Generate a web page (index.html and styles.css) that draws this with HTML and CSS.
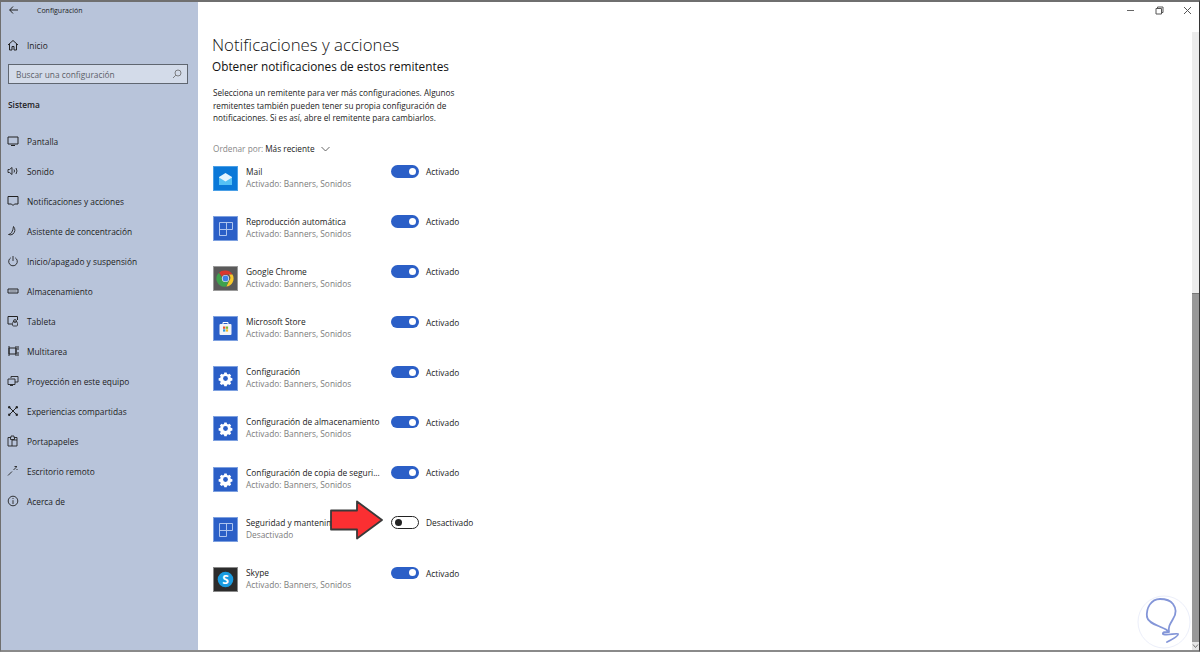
FILE: index.html
```html
<!DOCTYPE html>
<html lang="en">
<head>
  <meta charset="UTF-8">
  <meta name="viewport" content="width=device-width, initial-scale=1.0">
  <title>Configuración</title>
  <link rel="stylesheet" href="styles.css">
</head>
<body>
  <svg class="defs" width="0" height="0">
    <symbol id="tile-grid" viewBox="0 0 25 25">
      <path d="M6.500 6.500h13v7h-6v6h-7zM6.500 13.500h7M13.500 6.500v7" fill="none" stroke="#bccff3" stroke-width=".9"/>
    </symbol>
    <symbol id="tile-gear" viewBox="0 0 25 25">
      <g transform="translate(2.500 2.500) scale(.8)">
        <path d="M11 5h3l.4 2 1.400.6 1.700-1.100 2.100 2.100-1.100 1.700.6 1.400 2 .4v3l-2 .4-.6 1.400 1.100 1.700-2.100 2.100-1.700-1.100-1.400.6-.4 2h-3l-.4-2-1.400-.6-1.700 1.100-2.100-2.100 1.100-1.700-.6-1.400-2-.4v-3l2-.4.6-1.400-1.100-1.700 2.100-2.100 1.700 1.100 1.400-.6z" fill="#fff"/>
        <circle cx="12.500" cy="12.500" r="3" fill="#2b5fc7"/>
      </g>
    </symbol>
  </svg>

  <aside class="sidebar">
    <div class="titlebar">
      <svg class="back" width="9" height="8" viewBox="0 0 9 8"><path d="M4 .5L.7 4 4 7.500M.7 4H9" fill="none" stroke="#222" stroke-width="1"/></svg>
      <span class="apptitle">Configuración</span>
    </div>
    <div class="nav-item home">
      <svg class="nav-icon" viewBox="0 0 12 12"><path d="M1 6l5-4.500L11 6M2.500 5v6H5V7.500h2V11h2.500V5" fill="none" stroke="#222" stroke-width="1"/></svg>
      <span>Inicio</span>
    </div>
    <div class="search">
      <span>Buscar una configuración</span>
      <svg width="10" height="10" viewBox="0 0 10 10"><circle cx="6" cy="4" r="3" fill="none" stroke="#666" stroke-width=".8"/><path d="M3.800 6.200L1 9" stroke="#666" stroke-width=".8"/></svg>
    </div>
    <div class="section-title">Sistema</div>
    <nav class="nav">
      <div class="nav-item">
        <svg class="nav-icon" viewBox="0 0 12 12"><path d="M1 2h10v7H1zM4 10.500h4" fill="none" stroke="#222" stroke-width="1"/></svg>
        <span>Pantalla</span>
      </div>
      <div class="nav-item">
        <svg class="nav-icon" viewBox="0 0 12 12"><path d="M1 4.500h1.500L5 2.500v7L2.500 7.500H1zM7 4.500q1 1.500 0 3M9 3q2 3 0 6" fill="none" stroke="#222" stroke-width=".9"/></svg>
        <span>Sonido</span>
      </div>
      <div class="nav-item">
        <svg class="nav-icon" viewBox="0 0 12 12"><path d="M1 1.500h10V9H7.500L6 10.500 4.500 9H1z" fill="none" stroke="#222" stroke-width="1"/></svg>
        <span>Notificaciones y acciones</span>
      </div>
      <div class="nav-item">
        <svg class="nav-icon" viewBox="0 0 12 12"><path d="M6.500 1.500q3 4-.5 7.500-2 1.500-4.500.5 4-.5 5-8z" fill="none" stroke="#222" stroke-width=".9"/></svg>
        <span>Asistente de concentración</span>
      </div>
      <div class="nav-item">
        <svg class="nav-icon" viewBox="0 0 12 12"><path d="M3.800 2.800a4.300 4.300 0 1 0 4.400 0M6 1v5" fill="none" stroke="#222" stroke-width=".9"/></svg>
        <span>Inicio/apagado y suspensión</span>
      </div>
      <div class="nav-item">
        <svg class="nav-icon" viewBox="0 0 12 12"><path d="M1 4h10v4H1z" fill="none" stroke="#222" stroke-width="1"/><path d="M2.500 6h7" stroke="#777" stroke-width="1"/></svg>
        <span>Almacenamiento</span>
      </div>
      <div class="nav-item">
        <svg class="nav-icon" viewBox="0 0 12 12"><path d="M5 9H1V1.500h9.500V5" fill="none" stroke="#222" stroke-width="1"/><circle cx="8" cy="6" r="1.500" fill="none" stroke="#222" stroke-width=".8"/><path d="M5.500 8.500a2.500 2.500 0 0 1 5 0V10a1 1 0 0 1-1 1h-3a1 1 0 0 1-1-1z" fill="none" stroke="#222" stroke-width=".8"/></svg>
        <span>Tableta</span>
      </div>
      <div class="nav-item">
        <svg class="nav-icon" viewBox="0 0 12 12"><path d="M2 1v10M9 1v10M2 3h7v6H2zM11 1v4M11 7v4" fill="none" stroke="#222" stroke-width="1"/></svg>
        <span>Multitarea</span>
      </div>
      <div class="nav-item">
        <svg class="nav-icon" viewBox="0 0 12 12"><path d="M4 3V1.500h7V7H8M1 4h7v5.500H1zM3 10.500h3" fill="none" stroke="#222" stroke-width=".9"/></svg>
        <span>Proyección en este equipo</span>
      </div>
      <div class="nav-item">
        <svg class="nav-icon" viewBox="0 0 12 12"><path d="M2.500 2.500l7 7M9.500 2.500l-7 7" stroke="#222" stroke-width="1"/><circle cx="2.200" cy="2.200" r="1.200" fill="#222"/><circle cx="9.800" cy="2.200" r="1.200" fill="#222"/><circle cx="2.200" cy="9.800" r="1.200" fill="#222"/><circle cx="9.800" cy="9.800" r="1.200" fill="#222"/></svg>
        <span>Experiencias compartidas</span>
      </div>
      <div class="nav-item">
        <svg class="nav-icon" viewBox="0 0 12 12"><path d="M1 2.500h3V1h3v1.500h3V11H1zM5 5h5M5 5v6M3.500 2.500v2h4v-2" fill="none" stroke="#222" stroke-width=".9"/></svg>
        <span>Portapapeles</span>
      </div>
      <div class="nav-item">
        <svg class="nav-icon" viewBox="0 0 12 12"><path d="M1 10.500l4-4M6.500 5l3-3M7.500 1.500H10M10 5V4" fill="none" stroke="#222" stroke-width=".9"/></svg>
        <span>Escritorio remoto</span>
      </div>
      <div class="nav-item">
        <svg class="nav-icon" viewBox="0 0 12 12"><circle cx="6" cy="6" r="4.800" fill="none" stroke="#222" stroke-width=".9"/><path d="M6 5.200V9M6 3v1" stroke="#222" stroke-width=".9"/></svg>
        <span>Acerca de</span>
      </div>
    </nav>
  </aside>

  <main class="content">
    <div class="winbuttons">
      <svg width="9" height="9" viewBox="0 0 9 9"><path d="M0 4.500h7" stroke="#666" stroke-width="1"/></svg>
      <svg width="9" height="9" viewBox="0 0 9 9"><path d="M1 2.500h5.500V8H1zM2.500 2.500V1H8v5.500H6.500" fill="none" stroke="#555" stroke-width="1"/></svg>
      <svg width="9" height="9" viewBox="0 0 9 9"><path d="M1 1l7 7M8 1L1 8" stroke="#555" stroke-width="1"/></svg>
    </div>
    <h1>Notificaciones y acciones</h1>
    <h2>Obtener notificaciones de estos remitentes</h2>
    <p class="intro">Selecciona un remitente para ver más configuraciones. Algunos remitentes también pueden tener su propia configuración de notificaciones. Si es así, abre el remitente para cambiarlos.</p>
    <div class="sort">
      <span class="sort-label">Ordenar por:</span>
      <span class="sort-value">Más reciente</span>
      <svg width="9" height="6" viewBox="0 0 9 6"><path d="M.5 1l4 4 4-4" fill="none" stroke="#555" stroke-width=".9"/></svg>
    </div>

    <div class="senders">
      <div class="sender">
        <div class="tile tile-mail">
          <svg width="25" height="25" viewBox="0 0 25 25">
            <path d="M6 11l6.500-4 6.500 4v7H6z" fill="#e4f4fe"/>
            <path d="M6 11.500l6.500 4 6.500-4V19H6z" fill="#54c0f5"/>
          </svg>
        </div>
        <div class="sender-text"><div class="name">Mail</div><div class="state">Activado: Banners, Sonidos</div></div>
        <div class="toggle on"></div><span class="toggle-label">Activado</span>
      </div>
      <div class="sender">
        <div class="tile"><svg width="25" height="25"><use href="#tile-grid"/></svg></div>
        <div class="sender-text"><div class="name">Reproducción automática</div><div class="state">Activado: Banners, Sonidos</div></div>
        <div class="toggle on"></div><span class="toggle-label">Activado</span>
      </div>
      <div class="sender">
        <div class="tile tile-dark">
          <svg width="25" height="25" viewBox="0 0 25 25">
            <path d="M12.500 4.500a8 8 0 0 1 7 4h-7a4 4 0 0 0-3.600 2.300L6 6.800a8 8 0 0 1 6.500-2.300z" fill="#d9382e"/>
            <path d="M19.500 8.500a8 8 0 0 1-6.200 12l3-6a4 4 0 0 0-.5-6z" fill="#f7c92d"/>
            <path d="M6 6.800l3.500 6a4 4 0 0 0 6.500 1.700l-3 6A8 8 0 0 1 6 6.800z" fill="#3fa14d"/>
            <circle cx="12.500" cy="12.500" r="3.600" fill="#f4f4f4"/>
            <circle cx="12.500" cy="12.500" r="2.900" fill="#3e7fe6"/>
          </svg>
        </div>
        <div class="sender-text"><div class="name">Google Chrome</div><div class="state">Activado: Banners, Sonidos</div></div>
        <div class="toggle on"></div><span class="toggle-label">Activado</span>
      </div>
      <div class="sender">
        <div class="tile">
          <svg width="25" height="25" viewBox="0 0 25 25">
            <path d="M10 8V6.500h5V8" fill="none" stroke="#fff" stroke-width="1"/>
            <rect x="6.500" y="8" width="12" height="11" rx="1" fill="#f2f4f8"/>
            <rect x="10" y="10.500" width="2.300" height="2.300" fill="#e8502f"/>
            <rect x="12.800" y="10.500" width="2.300" height="2.300" fill="#7db72f"/>
            <rect x="10" y="13.300" width="2.300" height="2.300" fill="#2b9be0"/>
            <rect x="12.800" y="13.300" width="2.300" height="2.300" fill="#f5b81e"/>
          </svg>
        </div>
        <div class="sender-text"><div class="name">Microsoft Store</div><div class="state">Activado: Banners, Sonidos</div></div>
        <div class="toggle on"></div><span class="toggle-label">Activado</span>
      </div>
      <div class="sender">
        <div class="tile"><svg width="25" height="25"><use href="#tile-gear"/></svg></div>
        <div class="sender-text"><div class="name">Configuración</div><div class="state">Activado: Banners, Sonidos</div></div>
        <div class="toggle on"></div><span class="toggle-label">Activado</span>
      </div>
      <div class="sender">
        <div class="tile"><svg width="25" height="25"><use href="#tile-gear"/></svg></div>
        <div class="sender-text"><div class="name">Configuración de almacenamiento</div><div class="state">Activado: Banners, Sonidos</div></div>
        <div class="toggle on"></div><span class="toggle-label">Activado</span>
      </div>
      <div class="sender">
        <div class="tile"><svg width="25" height="25"><use href="#tile-gear"/></svg></div>
        <div class="sender-text"><div class="name">Configuración de copia de seguri...</div><div class="state">Activado: Banners, Sonidos</div></div>
        <div class="toggle on"></div><span class="toggle-label">Activado</span>
      </div>
      <div class="sender">
        <div class="tile"><svg width="25" height="25"><use href="#tile-grid"/></svg></div>
        <div class="sender-text"><div class="name">Seguridad y mantenimiento</div><div class="state">Desactivado</div></div>
        <div class="toggle off"></div><span class="toggle-label">Desactivado</span>
        <svg class="arrow" width="62" height="40" viewBox="0 0 62 40">
          <path d="M1 10.500h26v-9L52 20 27 38.500v-9H1z" fill="#fb2f32" stroke="#3a3a3a" stroke-width="1.800" stroke-linejoin="round"/>
        </svg>
      </div>
      <div class="sender">
        <div class="tile tile-black">
          <svg width="25" height="25" viewBox="0 0 25 25">
            <circle cx="12.500" cy="12.500" r="7.800" fill="#1a9be0"/>
            <text x="12.500" y="16.500" class="skype-s">S</text>
          </svg>
        </div>
        <div class="sender-text"><div class="name">Skype</div><div class="state">Activado: Banners, Sonidos</div></div>
        <div class="toggle on"></div><span class="toggle-label">Activado</span>
      </div>
    </div>

    <svg class="watermark" width="62" height="62" viewBox="0 0 62 62">
      <circle cx="31" cy="31" r="26" fill="#fff" stroke="#eceffa" stroke-width="1"/>
      <path d="M27 8C18 8 13 17 14 26C15 32 24 34 30 37C33 38 34 39 36 41C35 36 37 33 40 28C44 22 43 17 40 13C37 9 32 8 27 8ZM36 41C33 41 29 41 30 43C31 45 44 42 45 43C46 45 38 49 34 51" fill="none" stroke="#8496d8" stroke-width="1.800" stroke-linecap="round" stroke-linejoin="round"/>
    </svg>
  </main>

  <div class="scrollbar">
    <div class="thumb"></div>
    <div class="corner">
      <svg width="7" height="8" viewBox="0 0 7 8"><path d="M1 2.500l2.500 3 2.500-3" fill="none" stroke="#777" stroke-width="1"/></svg>
    </div>
  </div>
</body>
</html>
```

FILE: styles.css
```css
* {
  box-sizing: border-box;
}

body {
  margin: 0;
  display: flex;
  height: 652px;
  overflow: hidden;
  background-color: #fff;
  color: #222;
  font-family: "Open Sans", "Noto Sans", sans-serif;
  border-top: 2px solid #6f6f6f;
  border-left: 1px solid #6f6f6f;
  border-right: 1px solid #333;
  border-bottom: 2px solid #8a8a8a;
}

.defs {
  position: absolute;
}

/* left pane */
.sidebar {
  width: 197px;
  flex: none;
  background-color: #b8c4da;
  font-size: 8.35px;
}

.titlebar {
  display: flex;
  align-items: center;
  height: 16px;
  padding-left: 8px;
}

.apptitle {
  margin-left: 19px;
  font-size: 7px;
}

.nav-item {
  display: flex;
  align-items: center;
  height: 30px;
  padding-left: 6px;
  gap: 8px;
}

.nav-icon {
  width: 12px;
  height: 12px;
  flex: none;
}

.home {
  margin-top: 12px;
}

.search {
  display: flex;
  align-items: center;
  justify-content: space-between;
  height: 20px;
  margin: 4px 10px 0 7px;
  padding: 0 5px 0 7px;
  background-color: #d3dbe9;
  border: 1px solid #5f6670;
  color: #5c6068;
}

.section-title {
  margin: 14px 0 0 7px;
  font-weight: 600;
  line-height: 14px;
}

.nav {
  margin-top: 14px;
}

/* right pane */
.content {
  position: relative;
  flex: 1;
  padding-left: 14px;
}

.winbuttons {
  display: flex;
  justify-content: flex-end;
  gap: 19px;
  padding-top: 4px;
  height: 21px;
}

h1 {
  margin: 11px 0 0;
  font-size: 16.8px;
  font-weight: 300;
  line-height: 22px;
  color: #111;
}

h2 {
  margin: 2px 0 0;
  font-size: 11.8px;
  font-weight: 400;
  line-height: 17px;
  color: #111;
}

.intro {
  width: 245px;
  margin: 12px 0 0 1px;
  font-size: 8.2px;
  line-height: 12.5px;
}

.sort {
  display: flex;
  align-items: center;
  gap: 2px;
  margin: 17px 0 0 1px;
  font-size: 8.25px;
  line-height: 14px;
}

.sort-label {
  color: #888;
}

.sort svg {
  margin-left: 4px;
}

.senders {
  margin-top: 9px;
}

.sender {
  position: relative;
  display: flex;
  align-items: flex-start;
  height: 50.2px;
  padding-left: 1px;
}

.tile {
  width: 25px;
  height: 25px;
  margin-top: 1px;
  flex: none;
  background-color: #2b5fc7;
  border: 1px solid #7da0e0;
}

.tile svg {
  display: block;
  margin: -1px;
}

.tile-mail {
  background-color: #0a78d8;
  border-color: #4a9fe6;
}

.tile-dark {
  background-color: #5a5a5a;
  border-color: #9a9a9a;
}

.tile-black {
  background-color: #2c2c2c;
  border-color: #8a8a8a;
}

.sender-text {
  width: 145px;
  margin: 1px 0 0 8px;
  flex: none;
  font-size: 8.35px;
  line-height: 12px;
}

.state {
  color: #7c7c7c;
}

.name, .state {
  white-space: nowrap;
}

.toggle {
  position: relative;
  width: 28px;
  height: 12.5px;
  margin-top: .5px;
  flex: none;
  border-radius: 7px;
}

.toggle::after {
  content: "";
  position: absolute;
  top: 2.75px;
  width: 7px;
  height: 7px;
  border-radius: 50%;
}

.toggle.on {
  background-color: #2b5fc7;
}

.toggle.on::after {
  right: 3px;
  background-color: #fff;
}

.toggle.off {
  background-color: #fff;
  border: 1.5px solid #222;
}

.toggle.off::after {
  top: 1.25px;
  left: 3px;
  background-color: #222;
}

.toggle-label {
  margin: 1.5px 0 0 7px;
  font-size: 8.35px;
  line-height: 12px;
  white-space: nowrap;
}

.arrow {
  position: absolute;
  left: 118px;
  top: -16px;
}

.skype-s {
  fill: #fff;
  font-size: 12px;
  font-weight: 700;
  text-anchor: middle;
}

.watermark {
  position: absolute;
  right: -3px;
  bottom: -3px;
}

/* scrollbar down the right edge */
.scrollbar {
  display: flex;
  flex-direction: column;
  width: 7px;
  flex: none;
  margin-top: 30px;
  padding-top: 261px;
  background-color: #ececec;
}

.thumb {
  flex: 1;
  background-color: #989898;
  border-top: 1px solid #777;
}

.corner {
  height: 8px;
  background-color: #e4e4e4;
}

.corner svg {
  display: block;
}
```
